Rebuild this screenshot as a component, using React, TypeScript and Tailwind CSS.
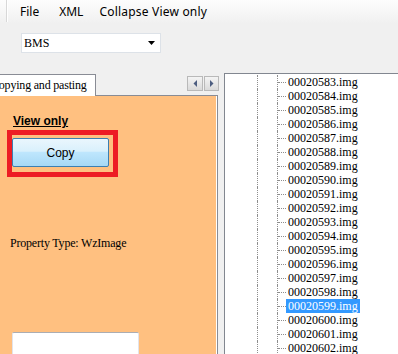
import React from 'react';

const files = Array.from({ length: 21 }, (_, i) => `000${20583 + i}.img`);
const selected = '00020599.img';

const TreeRow: React.FC<{ name: string }> = ({ name }) => {
  const isSel = name === selected;
  return (
    <div className="flex h-[14px]">
      <div className="w-[32px] shrink-0" />
      <div className="w-[20px] shrink-0 border-l border-dotted border-[#8e8e8e]" />
      <div className="flex shrink-0 items-center border-l border-dotted border-[#8e8e8e]">
        <div className="w-[8px] border-t border-dotted border-[#8e8e8e]" />
      </div>
      <span
        className={
          isSel
            ? 'px-[2px] leading-[14px] bg-[#3399ff] text-white'
            : 'px-[2px] leading-[14px] text-black'
        }
      >
        {name}
      </span>
    </div>
  );
};

export default function App() {
  return (
    <div className="relative h-[354px] w-[398px] overflow-hidden bg-[#f0f0f0] font-['Liberation_Sans',sans-serif] text-black">
      {/* menu bar */}
      <div className="flex h-[24px] items-center bg-gradient-to-b from-[#fdfdfd] to-[#f0f0f0] font-['Noto_Sans',sans-serif] text-[12px]">
        <div className="ml-[6px] h-[22px] w-[2px] self-start border-l border-r border-l-[#d8d8d8] border-r-white" />
        <span className="ml-[12px]">File</span>
        <span className="ml-[20px]">XML</span>
        <span className="ml-[16px] tracking-[0.2px]">Collapse View only</span>
      </div>

      {/* combo box */}
      <div className="ml-[21px] mt-[9px] flex h-[20px] w-[140px] items-center justify-between border border-[#dde2e8] bg-white pl-[2px] pr-[4px] font-['Liberation_Serif',serif] text-[12px]">
        <span>BMS</span>
        <svg width="8" height="5" viewBox="0 0 8 5" className="mt-[1px]">
          <path d="M0 0 H7 L3.5 4 Z" fill="#000" />
        </svg>
      </div>

      {/* main area */}
      <div className="mt-[20px] flex h-[281px]">
        {/* tab control */}
        <div className="flex w-[219px] shrink-0 flex-col">
          <div className="flex h-[22px]">
            <div className="relative z-10 mt-[1px] h-[22px] w-[96px] shrink-0 overflow-hidden border-r border-t border-[#898c95] bg-white">
              <span className="-ml-[9px] block whitespace-nowrap font-['Liberation_Serif',serif] text-[12px] leading-[20px] tracking-[-0.2px]">
                Copying and pasting
              </span>
            </div>
            <div className="flex flex-1 justify-end pt-[3px]">
              <div className="flex h-[15px] gap-[1px]">
                <button className="flex h-[15px] w-[16px] items-center justify-center border border-[#b9b9b9] bg-gradient-to-b from-[#f4f4f4] to-[#dadada]">
                  <svg width="4" height="7" viewBox="0 0 4 7">
                    <path d="M4 0 V7 L0.5 3.5 Z" fill="#4c5d80" />
                  </svg>
                </button>
                <button className="flex h-[15px] w-[15px] items-center justify-center border border-[#b9b9b9] bg-gradient-to-b from-[#f4f4f4] to-[#dadada]">
                  <svg width="4" height="7" viewBox="0 0 4 7">
                    <path d="M0 0 V7 L3.5 3.5 Z" fill="#4c5d80" />
                  </svg>
                </button>
              </div>
            </div>
          </div>
          <div className="w-[218px] flex-1 border-r border-t border-[#898c95]">
            <div className="flex h-full flex-col border-r border-white bg-[#ffc080]">
              <span className="ml-[13px] mt-[18px] self-start text-[12px] font-bold leading-[14px] underline">
                View only
              </span>
              <div className="ml-[7px] mt-[2px] self-start border-[5px] border-[#ed1c24] pb-[5px] pr-[4px] pt-[3px]">
                <button className="flex h-[29px] w-[97px] items-center justify-center rounded-[2px] border border-[#3c7fb1] bg-[linear-gradient(to_bottom,#eaf6fd_0%,#d9f0fc_45%,#bee6fd_50%,#a7d9f5_100%)] text-[12px]">
                  Copy
                </button>
              </div>
              <span className="ml-[10px] mt-[59px] font-['Liberation_Serif',serif] text-[12px] leading-[14px] tracking-[-0.2px]">
                Property Type: WzImage
              </span>
              <input className="ml-[12px] mt-[82px] h-[24px] w-[127px] rounded-[2px] border border-[#e2e3ea] border-t-[#abadb3] bg-white outline-none" />
            </div>
          </div>
        </div>

        {/* splitter */}
        <div className="w-[5px] shrink-0" />

        {/* tree view */}
        <div className="flex-1 overflow-hidden border-l border-t border-[#828790] bg-white pt-[1px] font-['Liberation_Serif',serif] text-[12px]">
          {files.map((f) => (
            <TreeRow key={f} name={f} />
          ))}
        </div>
      </div>
    </div>
  );
}
